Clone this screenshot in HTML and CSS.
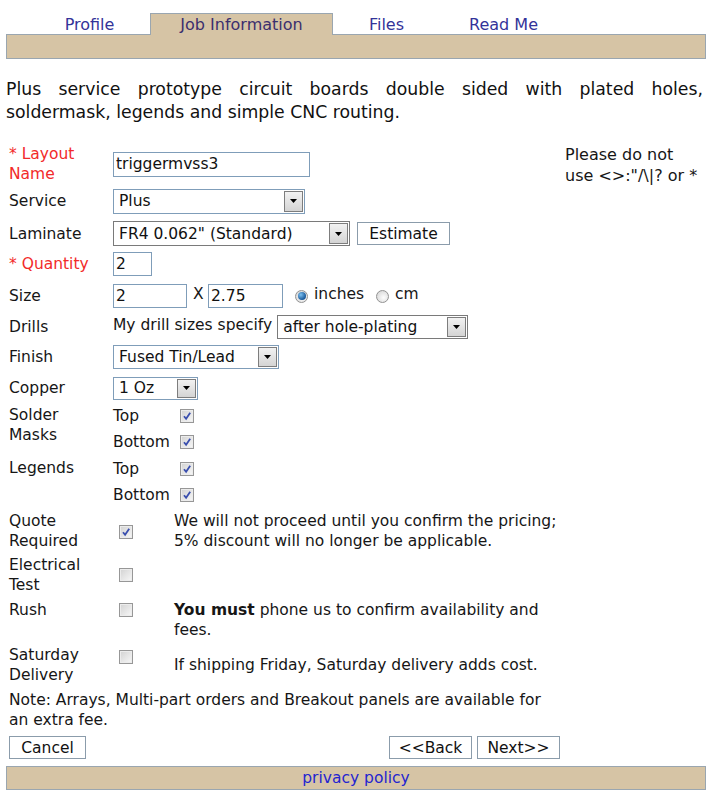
FILE: index.html
```html
<!DOCTYPE html>
<html>
<head>
<meta charset="utf-8">
<title>Job Information</title>
<link rel="stylesheet" href="styles.css">
</head>
<body>
<div class="page">
  <div class="tabs">
    <div class="tab spacer"></div>
    <div class="tab">Profile</div>
    <div class="tab active">Job Information</div>
    <div class="tab">Files</div>
    <div class="tab">Read Me</div>
    <div class="tab spacer"></div>
  </div>
  <div class="bar"></div>

  <p class="desc">Plus service prototype circuit boards double sided with plated holes, soldermask, legends and simple CNC routing.</p>

  <div class="main">
    <div class="form">
      <div class="row r-name">
        <div class="lbl req">* Layout<br>Name</div>
        <div><input class="inp w-name" type="text" value="triggermvss3"></div>
      </div>
      <div class="row r-service">
        <div class="lbl">Service</div>
        <div><span class="sel w-service"><select><option>Plus</option></select><span class="btn"><svg width="7" height="4" viewBox="0 0 7 4"><path d="M0 0h7L3.5 4z" fill="#000"/></svg></span></span></div>
      </div>
      <div class="row r-lam">
        <div class="lbl">Laminate</div>
        <div class="line"><span class="sel dark w-lam"><select><option>FR4 0.062" (Standard)</option></select><span class="btn"><svg width="7" height="4" viewBox="0 0 7 4"><path d="M0 0h7L3.5 4z" fill="#000"/></svg></span></span><button class="bt est" type="button">Estimate</button></div>
      </div>
      <div class="row r-qty">
        <div class="lbl req">* Quantity</div>
        <div><input class="inp w-qty" type="text" value="2"></div>
      </div>
      <div class="row r-size">
        <div class="lbl">Size</div>
        <div class="line"><input class="inp w-size1" type="text" value="2"><span class="x">X</span><input class="inp w-size2" type="text" value="2.75"><span class="radio on"><span class="dot"></span></span><span class="rl">inches</span><span class="radio off"></span><span class="rl">cm</span></div>
      </div>
      <div class="row r-drills">
        <div class="lbl">Drills</div>
        <div class="line"><span class="drilltxt">My drill sizes specify</span><span class="sel dark w-drills"><select><option>after hole-plating</option></select><span class="btn"><svg width="7" height="4" viewBox="0 0 7 4"><path d="M0 0h7L3.5 4z" fill="#000"/></svg></span></span></div>
      </div>
      <div class="row r-finish">
        <div class="lbl">Finish</div>
        <div><span class="sel w-finish"><select><option>Fused Tin/Lead</option></select><span class="btn"><svg width="7" height="4" viewBox="0 0 7 4"><path d="M0 0h7L3.5 4z" fill="#000"/></svg></span></span></div>
      </div>
      <div class="row r-copper">
        <div class="lbl">Copper</div>
        <div><span class="sel w-copper"><select><option>1 Oz</option></select><span class="btn"><svg width="7" height="4" viewBox="0 0 7 4"><path d="M0 0h7L3.5 4z" fill="#000"/></svg></span></span></div>
      </div>
      <div class="row top r-solder">
        <div class="lbl pt2">Solder<br>Masks</div>
        <div class="checks">
          <span>Top</span><span class="cb"><svg width="12" height="12" viewBox="0 0 12 12"><path d="M3 6.2l2.1 2.6 4.1-6" fill="none" stroke="#3a4fae" stroke-width="1.8"/></svg></span>
          <span>Bottom</span><span class="cb"><svg width="12" height="12" viewBox="0 0 12 12"><path d="M3 6.2l2.1 2.6 4.1-6" fill="none" stroke="#3a4fae" stroke-width="1.8"/></svg></span>
        </div>
      </div>
      <div class="row top r-legend">
        <div class="lbl pt2">Legends</div>
        <div class="checks">
          <span>Top</span><span class="cb"><svg width="12" height="12" viewBox="0 0 12 12"><path d="M3 6.2l2.1 2.6 4.1-6" fill="none" stroke="#3a4fae" stroke-width="1.8"/></svg></span>
          <span>Bottom</span><span class="cb"><svg width="12" height="12" viewBox="0 0 12 12"><path d="M3 6.2l2.1 2.6 4.1-6" fill="none" stroke="#3a4fae" stroke-width="1.8"/></svg></span>
        </div>
      </div>
      <div class="row3 q-quote">
        <div class="lbl">Quote<br>Required</div>
        <div><span class="cb mt3"><svg width="12" height="12" viewBox="0 0 12 12"><path d="M3 6.2l2.1 2.6 4.1-6" fill="none" stroke="#3a4fae" stroke-width="1.8"/></svg></span></div>
        <div class="txt">We will not proceed until you confirm the pricing; 5% discount will no longer be applicable.</div>
      </div>
      <div class="row3 q-elec">
        <div class="lbl">Electrical<br>Test</div>
        <div><span class="cb mt2"></span></div>
        <div></div>
      </div>
      <div class="row3 top q-rush">
        <div class="lbl">Rush</div>
        <div><span class="cb mt3"></span></div>
        <div class="txt"><span class="strong">You must</span> phone us to confirm availability and<br>fees.</div>
      </div>
      <div class="row3 top q-sat">
        <div class="lbl">Saturday<br>Delivery</div>
        <div><span class="cb mt5"></span></div>
        <div class="txt mt10">If shipping Friday, Saturday delivery adds cost.</div>
      </div>
      <p class="fnote">Note: Arrays, Multi-part orders and Breakout panels are available for an extra fee.</p>
      <div class="actions">
        <button class="bt w-cancel" type="button">Cancel</button>
        <div class="nav">
          <button class="bt w-nav" type="button">&lt;&lt;Back</button>
          <button class="bt w-nav" type="button">Next&gt;&gt;</button>
        </div>
      </div>
    </div>
    <div class="note">Please do not<br>use &lt;&gt;:"/\|? or *</div>
  </div>

  <div class="footer"><a href="#">privacy policy</a></div>
</div>
</body>
</html>
```

FILE: styles.css
```css
* { box-sizing: border-box; }
html, body { margin: 0; padding: 0; background: #fff; }
body {
  font-family: "DejaVu Sans", Verdana, sans-serif;
  font-size: 15.5px;
  color: #161616;
}
.page { width: 700px; margin-left: 6px; }

/* tabs */
.tabs {
  display: grid;
  grid-template-columns: 23px 121px 183px 107px 127px 1fr;
  margin-top: 13px;
  height: 22px;
}
.tab {
  border-bottom: 1px solid #9aa6b0;
  text-align: center;
  font-size: 16px;
  line-height: 18px;
  padding-top: 3px;
  color: #333399;
  white-space: nowrap;
}
.tab.active {
  background: #d6c4a5;
  border: 1px solid #9aa6b0;
  border-bottom: none;
  padding-top: 2px;
  color: #3b2f6e;
}
.bar {
  height: 24px;
  background: #d6c4a5;
  border: 1px solid #9aa6b0;
  border-top: none;
}

.desc {
  margin: 19px 3px 0 0;
  font-size: 17.3px;
  line-height: 23px;
  text-align: justify;
  color: #111;
}

.main { display: flex; margin-top: 20px; }
.form { width: 554px; padding-left: 3px; }
.note { margin-left: 5px; font-size: 16px; line-height: 21px; color: #161616; }

.row {
  display: grid;
  grid-template-columns: 104px 1fr;
  align-items: center;
}
.row3 {
  display: grid;
  grid-template-columns: 104px 61px 1fr;
  align-items: center;
}
.row.top, .row3.top { align-items: start; }
.lbl { line-height: 20px; }
.req { color: #f22a2a; }
.pt2 { padding-top: 2px; }
.line { display: flex; align-items: center; }

.r-name { height: 40px; }
.r-service { height: 34px; }
.r-lam { height: 31px; }
.r-qty { height: 30px; }
.r-size { height: 34px; }
.r-drills { height: 28px; }
.r-finish { height: 32px; }
.r-copper { height: 30px; }
.r-solder { height: 53px; }
.r-legend { height: 52px; }
.q-quote { height: 45px; }
.q-elec { height: 44px; }
.q-rush { height: 48px; padding-top: 3px; }
.q-sat { height: 45px; }

.txt { line-height: 20px; }
.strong { font-weight: bold; }
.mt10 { margin-top: 10px; }

/* inputs */
.inp {
  display: block;
  height: 24px;
  border: 1px solid #7f9db9;
  background: #fff;
  font: inherit;
  color: #111;
  padding: 0 2px;
  margin: 0;
  outline: none;
}
.w-name { width: 197px; height: 25px; }
.w-qty { width: 39px; }
.w-size1 { width: 74px; }
.w-size2 { width: 75px; }
.x { margin: 0 5px 0 6px; width: 10px; position: relative; top: -2px; }

.sel {
  display: inline-flex;
  vertical-align: middle;
  height: 25px;
  border: 1px solid #7f9db9;
  background: #fff;
  padding: 1px;
}
.sel.dark { border-color: #7a7a7a; }
.sel select {
  flex: 1;
  min-width: 0;
  -webkit-appearance: none;
  appearance: none;
  border: none;
  background: transparent;
  font: inherit;
  color: #111;
  padding: 0 0 0 4px;
  margin: 0;
  outline: none;
  height: 100%;
}
.sel .btn {
  width: 19px;
  flex: none;
  border: 1px solid #7d7d7d;
  background: linear-gradient(#f2f2f2, #d4d4d4);
  display: flex;
  align-items: center;
  justify-content: center;
}
.w-service { width: 192px; }
.w-lam { width: 237px; }
.w-drills { width: 191px; height: 24px; }
.w-finish { width: 166px; height: 24px; }
.w-copper { width: 85px; height: 23px; }

.drilltxt { margin-right: 5px; position: relative; top: -2px; }

.bt {
  height: 23px;
  border: 1px solid #8b9cab;
  background: #fff;
  font: inherit;
  color: #111;
  padding: 0;
  margin: 0;
}
.est { width: 93px; margin-left: 7px; }

/* radios */
.radio {
  width: 13px;
  height: 13px;
  border-radius: 50%;
  border: 1px solid #929292;
  background: radial-gradient(circle at 60% 60%, #fdfdfd, #d0d0d0);
  display: inline-flex;
  align-items: center;
  justify-content: center;
  flex: none;
}
.radio.on { margin-left: 12px; }
.radio.off { margin-left: 12px; }
.radio .dot {
  width: 8px;
  height: 8px;
  border-radius: 50%;
  background: radial-gradient(circle at 35% 35%, #7cc0f0, #1f5f9f 65%, #15457a);
}
.rl { margin-left: 6px; position: relative; top: -2px; }

/* checkboxes */
.checks {
  display: grid;
  grid-template-columns: 67px 14px;
  grid-auto-rows: 26px;
  align-items: center;
}
.cb {
  width: 14px;
  height: 14px;
  border: 1px solid #979797;
  background: linear-gradient(135deg, #d2d2d2, #f8f8f8);
  box-shadow: inset 0 0 0 1px #ececec;
  display: inline-flex;
  align-items: center;
  justify-content: center;
  vertical-align: top;
}
.row3 .cb { margin-left: 6px; }
.mt2 { margin-top: 2px; }
.mt3 { margin-top: 3px; }
.mt5 { margin-top: 5px; }

.fnote { margin: 0; line-height: 20px; }

.actions {
  display: flex;
  justify-content: space-between;
  margin-top: 6px;
}
.nav { display: flex; gap: 5px; }
.w-cancel { width: 77px; }
.w-nav { width: 83px; }

.footer {
  margin-top: 7px;
  height: 24px;
  background: #d6c4a5;
  border: 1px solid #9aa6b0;
  text-align: center;
  line-height: 22px;
}
.footer a { color: #2424d0; text-decoration: none; }
```
